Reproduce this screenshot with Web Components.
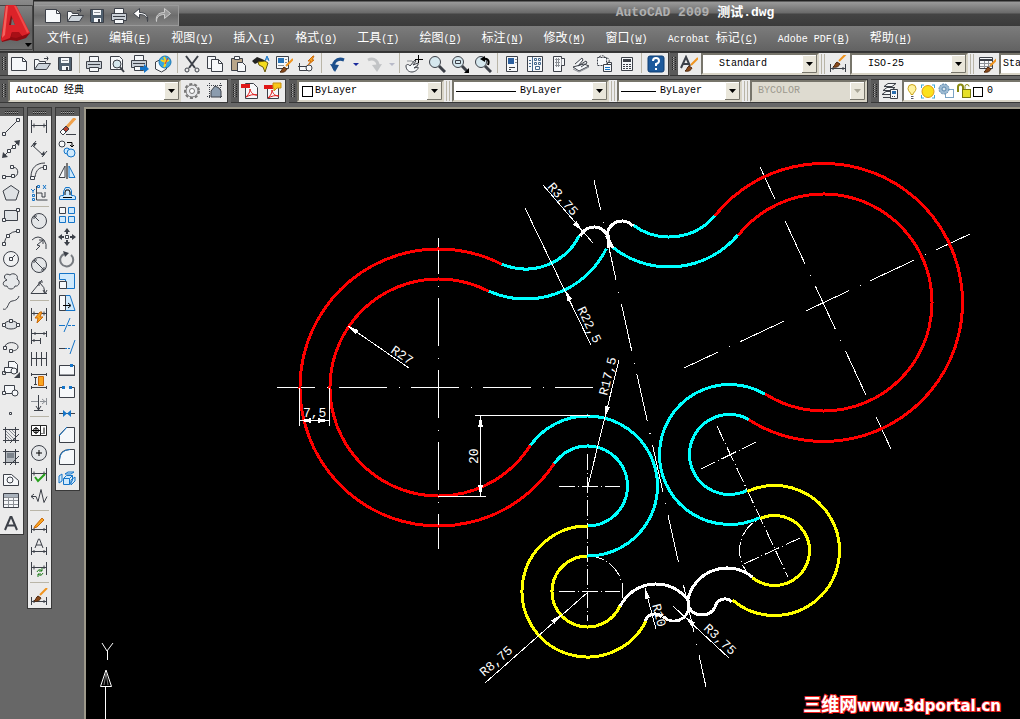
<!doctype html>
<html lang="zh">
  <head>
    <meta charset="UTF-8">
    <title>AutoCAD 2009 测试.dwg</title>
    <style>
      body { margin: 0; background: #676767; }
    </style>
  </head>
<body>

<template id="cad-app">
  <style>
    :host { display: flex; flex-direction: column; height: 100vh; min-height: 640px; overflow: hidden; background: #676767;
      font-family: "Liberation Mono", "Noto Sans CJK SC", monospace; font-size: 10px; color: #000; }
    header { display: grid; grid-template-columns: 34px 1fr; grid-template-rows: 26px 25px; flex: none; border-bottom: 1px solid #333; }
    cad-logo { grid-row: 1 / 3; }
    .row { display: flex; gap: 3px; flex: none; margin-bottom: 3px; white-space: nowrap; }
    .row.last { margin-bottom: 4px; }
    .tight { gap: 1px; }
    .rest { flex: 1 0 auto; }
    .work { display: flex; flex: 1; min-height: 0; }
    .dock { display: flex; gap: 3px; align-items: flex-start; flex: none; padding-right: 4px; }
    cad-drawing { flex: 1; min-width: 0; }
    svg { display: block; }
  </style>
  <header>
    <cad-logo></cad-logo>
    <cad-title><span slot="app">AutoCAD 2009</span><span slot="file">测试.dwg</span></cad-title>
    <cad-menu></cad-menu>
  </header>
  <div class="row tight">
    <cad-bar tools="new open save | print preview publish web | cut copy paste match-prop block-edit sheet-edit | undo drop redo drop-off | pan zoom zoom-window zoom-prev | properties design-center palettes sheet-set markup calc | help"></cad-bar>
    <cad-bar class="rest">
      <cad-tool name="text-style"></cad-tool>
      <cad-combo label="文字样式" value="Standard" style="--w: 118px; --pad: 16px"></cad-combo>
      <cad-split></cad-split>
      <cad-tool name="dim-style"></cad-tool>
      <cad-combo label="标注样式" value="ISO-25" style="--w: 118px; --pad: 16px"></cad-combo>
      <cad-split></cad-split>
      <cad-tool name="table-style"></cad-tool>
      <cad-combo label="表格样式" value="Standard" style="--w: 118px; --pad: 2px"></cad-combo>
    </cad-bar>
  </div>
  <div class="row last">
    <cad-bar>
      <cad-combo label="工作空间" value="AutoCAD 经典" style="--w: 173px; --pad: 6px"></cad-combo>
      <cad-tool name="gear"></cad-tool>
      <cad-tool name="workspace"></cad-tool>
    </cad-bar>
    <cad-bar tools="pdf pdf-note"></cad-bar>
    <cad-bar>
      <cad-combo label="颜色" value="ByLayer" style="--w: 147px; --pad: 2px">
        <svg width="14" height="16"><rect x="3.5" y="3.5" width="10" height="10" fill="#fff" stroke="#000"/></svg>
      </cad-combo>
      <cad-split></cad-split>
      <cad-combo label="线型" value="ByLayer" style="--w: 157px; --pad: 4px">
        <svg width="62" height="16"><path d="M2 8.5h60" stroke="#000"/></svg>
      </cad-combo>
      <cad-split></cad-split>
      <cad-combo label="线宽" value="ByLayer" style="--w: 125px; --pad: 4px">
        <svg width="37" height="16"><path d="M2 8.5h35" stroke="#000"/></svg>
      </cad-combo>
      <cad-split></cad-split>
      <cad-combo label="打印样式" value="BYCOLOR" off style="--w: 117px; --pad: 6px"></cad-combo>
    </cad-bar>
    <cad-bar class="rest">
      <cad-tool name="layers"></cad-tool>
      <cad-combo label="图层" value="0" style="--w: 240px; --pad: 3px">
        <svg width="80" height="18">
          <path d="M7 12.500c0-2-3-3-3-6a4 4 0 0 1 8 0c0 3-3 4-3 6z" fill="#fff3a0" stroke="#c9a21a"/><path d="M7 14.500h2.500M7 16.500h2.500" stroke="#556"/>
          <path d="M17 3h3M28 3h3M17 16h3M28 16h3M17.500 3v3M30.500 3v3M17.500 13v3M30.500 13v3" stroke="#3fa8d8"/><circle cx="24" cy="9.500" r="6" fill="#fbe21e" stroke="#e09a10"/>
          <rect x="41.500" y="7.500" width="8" height="8" fill="#fff" stroke="#7aa3c4"/><circle cx="40" cy="7" r="5" fill="#9dbbd3" stroke="#5b87ac" stroke-dasharray="2 1"/><circle cx="40" cy="7" r="2" fill="#d9e6ef" stroke="#5b87ac"/>
          <path d="M54 10V5a2.500 2.500 0 0 1 5 0v2" fill="none" stroke="#8a8a10" stroke-width="2"/><rect x="58.500" y="7.500" width="8" height="8" fill="#e6e02a" stroke="#77770c"/><path d="M61 8V4.500a2 2 0 0 1 4 0" fill="none" stroke="#8a8a10"/>
          <rect x="69.500" y="5.500" width="9" height="9" fill="#fff" stroke="#000"/>
        </svg>
      </cad-combo>
    </cad-bar>
  </div>
  <div class="work">
    <div class="dock">
      <cad-palette edge tools="line xline pline polygon rect arc circle cloud spline ellipse ellipse-arc insert make-block point hatch gradient region table text"></cad-palette>
      <cad-palette tools="dim-linear dim-aligned dim-arc dim-ordinate | dim-radius dim-jog dim-diameter dim-angle | dim-quick dim-base dim-continue dim-space dim-break | tolerance center-mark inspect jog-line | dim-edit dim-text dim-update | dim-brush"></cad-palette>
      <cad-palette tools="erase copy-obj mirror offset array move rotate scale stretch trim extend break-point break join chamfer fillet explode"></cad-palette>
    </div>
    <cad-drawing></cad-drawing>
  </div>
</template>

<template id="cad-logo">
  <style>
    :host { display: block; background: linear-gradient(#8a8a8a, #5e5e5e 60%, #707070); border-right: 1px solid #333; }
    button { display: block; width: 100%; height: 100%; padding: 0; border: 0; background: none; }
    svg { display: block; }
  </style>
  <button aria-label="菜单浏览器">
    <svg width="33" height="50" viewBox="0 0 33 50">
      <path d="M0 4.500h32.500v44H0" fill="none" stroke="#444"/>
      <path d="M1 36 2 41l8-2 7 1 9-3 4-5-5-3H8z" fill="#8e0a10"/>
      <path d="M5 6q0-2 2-2h7q2 0 3 2l13 26-8 3-4-4H12l-2 6-8 3-1-1z" fill="#dc2229"/>
      <path d="m11 14 4 10H9z" fill="#7a1115"/>
      <path d="m12 17 3 7h-4z" fill="#707070"/>
      <path d="M12 31h7l3 4-6 2-5-1z" fill="#a80f16"/>
      <path d="M6 5h2L5 34l-3 3z" fill="#f4615c"/>
      <path d="M14 5h2l13 26-2 1z" fill="#f04a48"/>
      <path d="M25 42h7l-4 4z" fill="#000"/>
    </svg>
  </button>
</template>

<template id="cad-title">
  <style>
    :host { display: flex; align-items: stretch; background: linear-gradient(#222 0 1px, #9a9a9a 2px, #6a6a6a 13px, #444 14px, #3a3a3a); }
    .quick { display: flex; margin-top: 5px; padding: 0 4px 0 8px; border: 1px solid #999; border-left: 0; background: linear-gradient(#8a8a8a, #6d6d6d 50%, #828282); box-sizing: border-box; align-items: center; }
    .quick cad-tool { --tool: 22px; }
    h1 { margin: 0; font-size: 13px; line-height: 26px; font-weight: bold; color: #b0b0b0; white-space: pre; }
    .file { color: #fff; }
    .before { flex: 16; }
    .after { flex: 9; }
  </style>
  <div class="quick">
    <cad-tool name="new"></cad-tool><cad-tool name="open"></cad-tool><cad-tool name="save"></cad-tool><cad-tool name="print"></cad-tool><cad-tool name="back"></cad-tool><cad-tool name="forward"></cad-tool>
  </div>
  <span class="before"></span>
  <h1><slot name="app"></slot> <span class="file"><slot name="file"></slot></span></h1>
  <span class="after"></span>
</template>

<template id="cad-menu">
  <style>
    :host { display: block; background: linear-gradient(#7c7c7c, #626262); min-width: 0; overflow: hidden; }
    nav { display: flex; gap: 20px; padding-left: 13px; height: 25px; align-items: center; }
    button { flex: none; padding: 0; border: 0; background: none; color: #fff; font: 12px/16px "Noto Sans CJK SC", sans-serif; white-space: pre; }
    span { font-family: "Liberation Mono", monospace; font-size: 10px; }
  </style>
  <nav></nav>
</template>

<template id="cad-bar">
  <style>
    :host { display: flex; flex: none; box-sizing: border-box; height: 24px; align-items: center; background: #ebebeb; border: solid #383838; border-width: 1px 1px 1px 0; }
    .grip { flex: none; width: 8px; height: 22px; background: #5a5a5a; }
    .grip svg, .tools { display: flex; }
  </style>
  <div class="grip"><svg width="8" height="22"><path d="M2.500 4v14M5.500 4v14" stroke="#222" stroke-dasharray="1 1"/><path d="M3.500 4v14" stroke="#aaa" stroke-dasharray="1 1"/></svg></div>
  <div class="tools"></div>
  <slot></slot>
</template>

<template id="cad-palette">
  <style>
    :host { display: block; box-sizing: border-box; width: 25px; background: #ebebeb; border: 1px solid #383838; }
    :host([edge]) { margin-left: -1px; }
    .grip { height: 8px; background: #5a5a5a; }
    .grip svg { display: block; margin: auto; }
    .tools { display: flex; flex-direction: column; }
  </style>
  <div class="grip"><svg width="15" height="8"><path d="M1 3.500h13M1 5.500h13" stroke="#222" stroke-dasharray="1 1"/><path d="M1 4.500h13" stroke="#aaa" stroke-dasharray="1 1"/></svg></div>
  <div class="tools"></div>
</template>

<template id="cad-tool">
  <style>
    :host { display: block; flex: none; width: var(--tool, 23px); height: 22px; }
    :host([name="drop"]), :host([name="drop-off"]) { width: 10px; }
    :host([name="undo"]), :host([name="redo"]) { width: 26px; }
    button { display: flex; align-items: center; justify-content: center; width: 100%; height: 100%; padding: 0 1px 0 0; border: 0; background: none; }
    svg { display: block; flex: none; fill: none; stroke: #3c4048; }
    .p { fill: #f6f8fa; }
    .n { stroke: none; }
    .k { fill: #3c4048; stroke: none; }
    .g { stroke: #8c9096; }
    .b { stroke: #1474c8; }
    .lb { fill: #cfe9fc; stroke: #1474c8; }
    .bk { fill: #1474c8; stroke: none; }
    .w2 { stroke-width: 2; }
    .o { fill: #f9a51f; stroke: #c9680b; }
    .br { fill: #8a4a1c; stroke: #4c270d; }
  </style>
  <button></button>
</template>

<template id="cad-split">
  <style>
    :host { display: flex; flex: none; width: 8px; height: 20px; box-sizing: border-box; justify-content: space-between; padding: 0 2px; }
    :host([small]) { width: 6px; }
    :host([flat]) { width: 19px; height: 6px; padding: 2px 0; margin: 0 2px; }
    i { width: 1px; background: #b9b5a7; }
    :host([small]) i + i { display: none; }
    :host([flat]) i { width: 19px; height: 1px; }
    :host([flat]) i + i { display: none; }
  </style>
  <i></i><i></i>
</template>

<template id="cad-combo">
  <style>
    :host { display: flex; flex: none; box-sizing: border-box; width: var(--w); height: 22px; position: relative; align-items: center; background: #fff; border: 2px solid; border-color: #77756b #d8d4c6 #d8d4c6 #77756b; }
    :host([off]) { background: #dedbd0; }
    select { flex: 1; min-width: 0; height: 18px; appearance: none; border: 0; outline: 0; border-radius: 0; margin: 0; padding: 0 16px 0 var(--pad); background: none; color: #000; font: 10px/18px "Liberation Mono", "Noto Sans CJK SC", monospace; }
    select:disabled { color: #9c998e; opacity: 1; }
    .arrow { position: absolute; right: 0; top: 0; pointer-events: none; }
  </style>
  <slot></slot>
  <select><option></option></select>
  <svg class="arrow" width="15" height="18"><rect width="15" height="18" fill="#e9e6da"/><path d="M.5 17.500V.5h14" fill="none" stroke="#fff"/><path d="M0 17.500h14.500V0" fill="none" stroke="#77756b"/><path class="tip" d="M4 7h7l-3.500 4z"/></svg>
</template>

<template id="cad-drawing">
  <style>
    :host { display: block; position: relative; box-sizing: border-box; overflow: hidden; background: #000; border: solid #9d998a; border-width: 2px 0 0 2px; }
    svg { display: block; width: 100%; height: 100%; }
    text { fill: #fff; font: 13px "Liberation Mono", monospace; }
    .mark { position: absolute; right: 19px; bottom: 3px; color: #fff; font: bold 15px/20px "DejaVu Sans", sans-serif; -webkit-text-stroke: 2px #f02020; paint-order: stroke fill; white-space: nowrap; }
    .mark span { font-size: 18px; font-weight: bold; font-family: "Noto Sans CJK SC", sans-serif; }
  </style>
  <svg>
    <!-- everything is drawn in window units; the group moves the origin to the canvas corner -->
    <g transform="translate(-86 -109)">
      <g id="axes" fill="none" stroke="#fff" shape-rendering="crispEdges"></g>
      <g id="arcs" fill="none" stroke-width="3" shape-rendering="crispEdges"></g>
      <g id="dims" fill="#fff" stroke="#fff" shape-rendering="crispEdges"></g>
      <g id="labels"></g>
      <g fill="none" stroke="#fff">
        <path d="M102 643l5 8 6-8M107.500 651v9"/>
        <path d="M100.500 686.500h11L106 670z"/><path d="M104 685l2-12 2 12" stroke="#777"/><path d="M105.500 687v60"/>
      </g>
    </g>
  </svg>
  <div class="mark"><span>三维网</span>www.3dportal.cn</div>
</template>

<script>
const brush = '<path d="M16 2 9 9" stroke="#f0941e" stroke-width="2"/><path class="br" d="M3 15c2-1 2-4 4-5l3 2c-1 2-3 4-7 3z"/>';
const sheet = '<path class="p" d="M1.500 2.500h11l4 4v9h-15z"/><path d="M12.500 2.500v4h4"/>';
const printer = '<path class="p" d="M4.500 6V1.500h9V6"/><path d="M1.500 6.500h15v7h-15z" fill="#c9cfd6"/><path d="M3 9.500h12"/><path class="p" d="M4.500 12.500h9v4h-9z"/>';
const lens = '<circle cx="7" cy="7" r="5.500" fill="#d5e7ee"/><path d="m11 11 6 6" stroke-width="3"/>';
const dim = '<path d="M1.500 2v13M16.500 2v13M2 7.500h14M4 5.500v4M14 5.500v4"/>';
const dimLow = '<path d="M1.500 9v8M16.500 9v8M1 13.500h16M4 12v3M14 12v3"/>';
const bolt = 'M10 6 5 12h3l-1 5 6-6h-3l2-5z';

const icons = {
  'new': sheet,
  'open': '<path class="p" d="M1.500 14.500v-10h4l1 2h6v2"/><path d="M1.500 14.500l4-6h12l-4 6z" fill="#cdd4db"/><path d="M11 3.500h4l-1-2M15 3.500l-1 2"/>',
  'save': '<path d="M2.500 2.500h13v13h-12l-1-1z" fill="#50606f"/><path class="p n" d="M5 3h8v5H5z"/><path d="M6 5.500h6" class="g"/><path class="p n" d="M6 11h7v4H6z"/><path class="k" d="M10 12h2v3h-2z"/>',
  'print': printer,
  'back': '<path d="M15.500 14.500c0-5-3-7-8-7v4l-6-5 6-5v4c7 0 9 4 8 9z" fill="#fff"/>',
  'forward': '<path d="M2.500 14.500c0-5 3-7 8-7v4l6-5-6-5v4c-7 0-9 4-8 9z" fill="#9a9a9a" stroke="#ccc"/>',
  'preview': '<path class="p" d="M2.500 1.500h9l3 3v10h-12z"/><circle cx="9" cy="9" r="4" fill="#d5e7ee"/><path class="w2" d="m12 12 4 5"/>',
  'publish': '<g transform="translate(-1 -1)">' + printer + '</g><path class="bk" d="M9 12h4V9l5 5-5 4v-3H9z"/>',
  'web': '<path class="p" d="m1.500 7 6-3 5 3v7l-5 3-6-3z"/><circle cx="11" cy="7" r="6" fill="#35a8e0" stroke="#1f78b4"/><path d="M7 5q4 3 8 0M10 2q3 5 0 10" stroke="#f6d41c" stroke-width="2"/><path d="M14 3l-3 6" stroke="#d33"/>',
  'cut': '<path class="w2" d="m3 1 9 12M15 1 6 13"/><circle cx="4" cy="15" r="2"/><circle cx="14" cy="15" r="2"/>',
  'copy': '<path class="p" d="M1.500 1.500h8v12h-8z"/><path class="p" d="M5.500 4.500h7l4 4v8h-11z"/><path d="M12.500 4.500v4h4"/>',
  'paste': '<path d="M2.500 3.500h11v12h-11z" fill="#b9a68a"/><path class="p" d="M5.500 1.500h5v3h-5zM8.500 7.500h5l3 3v6h-8z"/>',
  'match-prop': '<path d="M0 6l5-4 5 2 4 2-3 5-4-4-4 2z" fill="#222" stroke="none"/><path d="M6 7l7-1 3 2-3 9-2-5-4-2z" fill="#f4dc1c" stroke="#6a5a10"/><path class="b" d="M13 6l2-5 2 5M14 4h3"/>',
  'block-edit': '<path class="p" d="M1.500 1.500h12v12h-12z"/><path d="M3 3h6v5H3z" fill="#2673b8" stroke="none"/><path class="g" d="M10 4.500h2M10 7.500h2M3 10.500h6"/>' + '<g transform="translate(2 2)">' + brush + '</g>',
  'sheet-edit': '<path class="p" d="M1.500 11.500h9v4h-9z"/><circle cx="11" cy="13" r="3" class="p"/><path d="M1.500 8v7M0 11.500h5"/><path class="o" d="m15 1-5 5h3l-3 4 6-5h-2l2-4z"/>',
  'undo': '<path d="M6 15c-4-7 2-13 9-10" stroke="#1c4f8c" stroke-width="3"/><path d="M1 9l5 8 4-7z" fill="#1c4f8c" stroke="none"/>',
  'redo': '<path d="M12 13c3-6-3-11-9-8" stroke="#c2c4c6" stroke-width="3"/><path d="M17 9l-5 8-5-7z" fill="#c2c4c6" stroke="none"/>',
  'drop': '<path d="M6 8h6l-3 3z" fill="#1a2a9c" stroke="none"/>',
  'drop-off': '<path d="M6 8h6l-3 3z" fill="#b8bac8" stroke="none"/>',
  'pan': '<path class="p" d="M1 11c0-2 3-2 4 0l5-6 1 1-3 4 5-2v2l-4 3 4-1c1 2-3 5-6 5-4 0-6-3-6-6z"/><path d="M2 6h5l2 2" class="g"/><path stroke="#000" d="M13.500 0v8M10 4.500h8"/>',
  'zoom': lens,
  'zoom-window': lens + '<path d="M4.500 5.500h5v3h-5z"/><path fill="#000" stroke="none" d="M18 13v5h-5z"/>',
  'zoom-prev': lens + '<path d="M14 10c2-5-1-7-5-6" stroke="#000" stroke-width="2"/><path d="M6 4l5-3v6z" fill="#000" stroke="none"/>',
  'properties': '<path class="p" d="M3.500 1.500h11v15h-11z"/><path d="M5 3h6v6H5z" fill="#2b5f9e" stroke="none"/><path class="g" d="M12 4.500h2M12 7.500h2"/><path d="M6 12.500h6M6 14.500h2"/>',
  'design-center': '<path class="p" d="M1.500 1.500h15v15h-15z"/><path d="M6.500 2v14M3 5.500h2M3 8.500h2M3 11.500h2M8.500 3.500h2v2h-2zM12.500 3.500h2v2h-2zM8.500 7.500h2v2h-2zM12.500 7.500h2v2h-2zM9.500 11.500h4v3h-4z" stroke="#41668c"/>',
  'palettes': '<path class="p" d="M4.500 1.500h8v15h-8z"/><path class="p" d="M12.500 3.500h3v7h-3"/><path d="M6 4.500h5M6 7.500h5M6 10.500h5M7.500 3v9M9.500 3v9" class="g"/>',
  'sheet-set': '<path class="p" d="m1 12 11-3 5 2-10 5zM3 9l7-6 1 2-5 6M6 11l8-5 1 2-6 4"/><path class="g" d="M1 14l6 3 10-5"/>',
  'markup': '<path class="p" d="M2.500 2.500h9v8h-9z" stroke-dasharray="2 1"/><path d="M4 2q4-3 7 1 4 0 3 4" stroke-dasharray="2 1"/><path class="p" d="M8.500 9.500h8v7h-8zM12.500 7.500h4v2h-4z"/><path class="b" d="M10 12.500h5M10 14.500h5"/>',
  'calc': '<path class="p" d="M3.500 2.500h11v13h-11z"/><path class="k" d="M5 4h8v3H5z"/><path d="M5 9.500h8M5 11.500h8M5 13.500h8" stroke-dasharray="2 1"/>',
  'help': '<rect x="1" y="1" width="16" height="16" rx="2" fill="#1d5a9c" stroke="#0e3c70"/><path d="M6 6q0-3 3-3t3 3q0 2-3 3v2M9 13v2" stroke="#fff" stroke-width="2"/>',
  'text-style': '<path class="w2" d="M1 13 6 2l4 9M3 9h6"/><g transform="translate(2 1)">' + brush + '</g>',
  'dim-style': dimLow + '<g transform="translate(1 -3)">' + brush + '</g>',
  'table-style': '<path class="p" d="M1.500 2.500h13v11h-13z"/><path d="M2 5h12" stroke-width="2"/><path class="g" d="M2 8.500h12M2 11.500h12M6.500 6v7M10.500 6v7"/><g transform="translate(3 2)">' + brush + '</g>',
  'gear': '<circle cx="9" cy="9" r="7" stroke="#777" stroke-width="2" stroke-dasharray="3 2"/><circle cx="9" cy="9" r="6" fill="#e9eaec" stroke="#777"/><circle cx="9" cy="9" r="2.500" fill="#fff" stroke="#777"/>',
  'workspace': '<path d="M3.500 1v16M14.500 1v16M1 3.500h16M1 14.500h16" stroke-dasharray="1 1"/><path d="M5 15V9l4-5 4 2 2 3v6z" fill="#8b9cae"/>',
  'pdf': '<path class="p" d="M4.500 1.500h8l4 4v11h-12z"/><path d="M0 2h9v4H0z" fill="#e01818" stroke="none"/><path d="M5 15c3-3 4-5 4-8 1 4 3 6 7 6-4-1-7 0-11 2z" stroke="#e01818"/>',
  'pdf-note': '<path class="p" d="M3.500 4.500h11v12h-11z"/><path d="M0 3h9v4H0z" fill="#e01818" stroke="none"/><path d="M4 16c3-3 4-5 4-8 1 4 3 6 7 6-4-1-7 0-11 2z" stroke="#e01818"/><path d="M9 1h8v5h-4l-3 3V6H9z" fill="#f8c81c" stroke="#c98f10"/>',
  'layers': '<path class="p" d="M3 4.500l4-3h8l-4 3zM2 8.500l4-3h8l-4 3zM1 12.500l4-3h8l-3 3z"/><path d="M2 15.500h7"/><path class="p" d="M9.500 7.500h7v9h-7z"/><path d="M11 9h4v3h-4z" fill="#2b6fb0" stroke="none"/><path d="M11 14.500h4" stroke-dasharray="1 1"/>',

  'line': '<path d="M2 16 16 2"/><path class="p" d="M.5 14.500h3v3h-3zM14.500.5h3v3h-3z"/>',
  'xline': '<path d="M2 16 16 2"/><path class="k" d="M0 18l1-6 5 5zM18 0l-1 6-5-5z"/><path class="p" d="M5.500 9.500h3v3h-3zM10.500 5.500h3v3h-3z"/>',
  'pline': '<path d="M2 14.500h10c5 0 5-9 0-9H9"/><path class="p" d="M.5 13.500h3v3h-3zM8.500 3.500h3v3h-3zM9.500 12.500h3v3h-3z"/>',
  'polygon': '<path d="M9 1.500 17 7l-3 9H4L1 7z" fill="#dfe2e5"/>',
  'rect': '<path d="M2.500 4.500h13v10h-13z" fill="#dfe2e5"/><path class="p" d="M.5 12.500h3v3h-3zM14.500 2.500h3v3h-3z"/>',
  'arc': '<path d="M2 16Q4 4 16 3"/><path class="p" d="M.5 14.500h3v3h-3zM4.500 6.500h3v3h-3zM14.500 1.500h3v3h-3z"/>',
  'circle': '<circle cx="9" cy="9" r="7.500" fill="#f0f1f2"/><path d="m9 9 4-4"/><path class="p" d="M7.500 7.500h3v3h-3z"/>',
  'cloud': '<path d="M5 8C0 6 3 0 8 3c3-3 9 0 7 4 4 2 2 8-2 7-1 4-7 4-8 0-5 1-5-5 0-6z" fill="#e6e8ea"/>',
  'spline': '<path d="M1 15C5 17 6 10 8 8s7 0 9-6"/>',
  'ellipse': '<ellipse cx="9" cy="9" rx="7" ry="4" fill="#dfe2e5"/><path class="p" d="M.5 7.500h3v3h-3zM14.500 7.500h3v3h-3zM7.500 3.500h3v3h-3z"/>',
  'ellipse-arc': '<path d="M3 10C2 3 16 3 16 9c0 3-4 4-7 4"/><path class="p" d="M1.500 8.500h3v3h-3zM7.500 11.500h3v3h-3z"/>',
  'insert': '<path class="p" d="M6.500 1.500h6l3 3v8h-9z"/><path class="p" d="M2.500 7.500h8v5h-8z"/><circle class="p" cx="12" cy="11" r="3"/><path d="M.5 11.500h3v3h-3z"/><path class="k" d="M18 12v6h-6z"/>',
  'make-block': '<path class="p" d="M2.500 3.500h10v8h-10z"/><circle class="p" cx="13" cy="11" r="3"/><path class="p" d="M.5 9.500h3v3h-3z"/>',
  'point': '<path class="p" d="M7.500 8.500h2v2h-2z"/>',
  'hatch': '<path d="M3.500 1v16M13.500 1v16M1 3.500h16M1 14.500h16"/><path class="g" d="m4 5 9 9M4 8l6 6M4 11l3 3M7 4l6 6M10 4l3 3"/><path d="m8 17 9-9" />',
  'gradient': '<path d="M4 4h9v10H4z" fill="#b4b9be" stroke="none"/><path d="M5 5h7v5H5z" fill="#7c838b" stroke="none"/><path d="M3.500 1v16M13.500 1v16M1 3.500h16M1 14.500h16"/><path d="m8 17 9-9"/>',
  'region': '<path class="p" d="M1.500 4.500h8l7 6v5h-15z"/><circle class="p" cx="8" cy="10" r="3"/>',
  'table': '<path class="p" d="M1.500 1.500h15v14h-15z"/><path d="M2 2h14v3H2z" fill="#a9b2bc" stroke="none"/><path class="g" d="M2 5.500h14M2 8.500h14M2 12.500h14M6.500 5v10M11.500 5v10"/>',
  'text': '<path d="M3 16 8.500 3h1L15 16M5 11.500h8" stroke-width="2"/>',

  'dim-linear': dim,
  'dim-aligned': '<path d="m2 5 12 11M1 7l5-6M12 17l5-6"/><path class="k" d="M3 3h4l-3 4zM15 15h-4l3-4z"/>',
  'dim-arc': '<path d="M5 15C6 8 9 5 16 5"/><path d="M1 15C1 6 6 1 15 1"/><path class="p" d="M.5 14.500h4v3h-4zM13.500 3.500h3v4h-3z"/>',
  'dim-ordinate': '<path d="M6.500 2v14h11M7 9h5v4h3V8"/><path class="b" d="M2.500 10.500h2v2h-2zM2.500 14.500h2v2h-2zM1 5l2 2 2-2M3 7v2M13 1l3 4M16 1l-3 4M7.500 1.500h2v2h-2z"/>',
  'dim-radius': '<circle cx="9" cy="9" r="7.500" fill="#e4e6e8"/><path d="M9 9 4 4M4 7V4h3"/>',
  'dim-jog': '<path d="M2 6q6-6 12 0 3 4 2 9M6 16l4-4-3-1 6-5M9 6h4v4"/>',
  'dim-diameter': '<circle cx="9" cy="9" r="7.500" fill="#e4e6e8"/><path d="m4 4 10 10M4 7V4h3M14 11v3h-3"/>',
  'dim-angle': '<path d="M17 15.500H1L12 2M10 5q5 4 5 10M13 12l2 4 2-4M9 8V4h4"/>',
  'dim-quick': dim + '<path class="o" d="' + bolt + '"/>',
  'dim-base': '<path d="M1.500 1v15M10.500 10v6M16.500 3v6M2 5.500h14M2 12.500h8M5 4v3M14 4v3M4 11v3"/>',
  'dim-continue': '<path d="M1.500 2v14M6.500 2v14M11.500 2v14M16.500 2v14M2 8.500h14"/>',
  'dim-space': '<path d="M1.500 1v3M16.500 1v3M1 2.500h16M1.500 14v3M16.500 14v3M1 15.500h16M5.500 5v8M4 5.500h3M4 12.500h3"/><path class="o" d="M8.500 4.500h5v9h-5z"/>',
  'dim-break': '<path class="g" d="M1 7.500h7M10 7.500h7M16.500 4v7M12 5l3 2.500-3 2.500"/><path d="M8.500 1v15M4 16.500h9M6 12l2.500 4 2.500-4"/>',
  'tolerance': '<path d="M1.500 3.500h15v10h-15zM10.500 4v9" fill="#fff" stroke="#222"/><circle cx="6" cy="8.500" r="2.500" stroke="#000"/><path d="M2 8.500h8M6 5v7M14 5.500V12M12 11v1" stroke="#000"/>',
  'center-mark': '<circle cx="9" cy="9" r="7.500" fill="#e4e6e8"/><path stroke="#000" d="M9 6v6M6 9h6"/>',
  'inspect': dim + '<path d="m5 11 3 4 7-7" stroke="#26a11b" stroke-width="2"/>',
  'jog-line': '<path d="M1 8.500h5l2 5 3-12 3 13 3-6M4 6 1 8.500 4 11"/>',
  'dim-edit': dimLow + '<path d="M5 10 12 2l2 2-7 7-3 1z" class="o"/>',
  'dim-text': dimLow + '<path d="M5 10 8.500 1h1L13 10M6 7h6"/>',
  'dim-update': dim + '<path class="n" fill="#ebebeb" d="M6 9h9v8H6z"/><path d="M7 12q2-4 5-1M13 13q-2 4-5 1M12 8v3H9M8 17v-3h3" stroke="#1d7a18"/>',
  'dim-brush': dimLow + '<g transform="translate(1 -2)">' + brush + '</g>',

  'erase': '<path d="M17 0 9 9" stroke="#f0a24c" stroke-width="3"/><path d="m4 12 4-4 3 3-4 4z" fill="#b6402c"/><path d="m2 14 3-3 3 3-3 3z" fill="#fff"/><path d="M8 16.500h10"/>',
  'copy-obj': '<circle cx="4" cy="4" r="3" class="p"/><circle cx="9" cy="11" r="3" class="lb"/><circle cx="13" cy="13" r="4" class="lb"/><path stroke="#000" d="M9 2.500h5v4M12 5l2 2 2-2"/>',
  'mirror': '<path class="p" d="M1 15.500 7 4v11.500z"/><path class="lb" d="M17 15.500 11 4v11.500z"/><path stroke="#000" d="M9 1v16"/>',
  'offset': '<path class="lb" d="M1.500 15.500v-3l2-1h2v-4l2-4h4l2 3v5h2l2 1v3z"/><path stroke="#000" d="M5 13.500h9M7 11V8l1-2h3l1 2v3"/>',
  'array': '<path class="p" d="M1.500 1.500h6v6h-6z"/><path class="lb" d="M10.500 1.500h6v6h-6zM1.500 10.500h6v6h-6zM10.500 10.500h6v6h-6z"/>',
  'move': '<path class="w2" d="M9 2v4M9 12v4M2 9h4M12 9h4"/><path class="k" d="M9 0l3 4H6zM9 18l3-4H6zM0 9l4-3v6zM18 9l-4-3v6z"/><path class="p" d="M7.500 7.500h3v3h-3z"/>',
  'rotate': '<path d="M6 4a6.500 6.500 0 1 0 7 1" stroke="#777b80" stroke-width="2"/><path class="k" d="M5 1l6 2-4 4z"/>',
  'scale': '<path class="lb" d="M1.500 1.500h15v15h-9v-9h-6z"/><path class="p" d="M1.500 9.500h7v7h-7z"/>',
  'stretch': '<path class="lb" d="M7 1.500h5l5 15H7z"/><path class="p" d="M1.500 1.500h6v15h-6z"/><path stroke="#000" d="M5 11.500h7M10 9l3 2.500-3 2.500"/>',
  'trim': '<path class="b" d="M10 9.500h8" stroke-dasharray="3 1"/><path class="b" d="M1 9.500h6"/><path class="b" d="m6 16 6-14"/>',
  'extend': '<path d="M1 10.500h6"/><path class="b" d="M7 10.500h5" stroke-dasharray="2 1"/><path class="b" d="m12 16 5-14"/>',
  'break-point': '<path class="p" d="M1.500 15V5.500h15V15z"/><path d="M1 15.500h16"/><path class="bk" d="M12 4h3v3h-3z"/>',
  'break': '<path class="p" d="M1.500 15.500V5.500h15v10z"/><path d="M7 5.500h4" stroke="#ebebeb"/><path class="bk" d="M4 4h3v3H4zM11 4h3v3h-3z"/>',
  'join': '<path d="M1 9.500h16"/><path class="bk" d="m5 6 4 3.500-4 3.500zM13 6 9 9.500l4 3.500z"/>',
  'chamfer': '<path class="p" d="M1.500 16.500V9l7-7.500h8v15z"/><path class="b" d="m1 10 8-9"/>',
  'fillet': '<path class="p" d="M1.500 16.500V11q0-9 10-9.500h5v15z"/><path class="b" d="M1.500 12Q2 2 12 1.500"/>',
  'explode': '<path class="lb" d="M5.500 8.500h6v6h-6zM5.500 8.500l3-3h6l-3 3M14.500 5.500v5l-3 4M1 6l3-2v7l-3 2zM7 4l3-2h6l-3 2zM13 10l4-3v4l-4 4z"/>'
};

function shadow(el) {
  const root = el.attachShadow({mode: 'open'});
  root.appendChild(document.getElementById(el.localName).content.cloneNode(true));
  return root;
}

function addTools(box, list, attr) {
  (list || '').split(' ').filter(Boolean).forEach(name => {
    const el = document.createElement(name === '|' ? 'cad-split' : 'cad-tool');
    if (name === '|') el.setAttribute(attr, '');
    else el.setAttribute('name', name);
    box.appendChild(el);
  });
}

for (const name of ['cad-logo', 'cad-title', 'cad-split']) {
  customElements.define(name, class extends HTMLElement {
    constructor() {
      super();
      shadow(this);
    }
  });
}

customElements.define('cad-tool', class extends HTMLElement {
  connectedCallback() {
    if (this.shadowRoot) return;
    const button = shadow(this).querySelector('button');
    const name = this.getAttribute('name');
    button.setAttribute('aria-label', name);
    button.innerHTML = '<svg width="18" height="18" viewBox="0 0 18 18">' + icons[name] + '</svg>';
  }
});

customElements.define('cad-bar', class extends HTMLElement {
  connectedCallback() {
    if (this.shadowRoot) return;
    addTools(shadow(this).querySelector('.tools'), this.getAttribute('tools'), 'small');
  }
});

customElements.define('cad-palette', class extends HTMLElement {
  connectedCallback() {
    if (this.shadowRoot) return;
    addTools(shadow(this).querySelector('.tools'), this.getAttribute('tools'), 'flat');
  }
});

customElements.define('cad-combo', class extends HTMLElement {
  connectedCallback() {
    if (this.shadowRoot) return;
    const root = shadow(this);
    const select = root.querySelector('select');
    select.setAttribute('aria-label', this.getAttribute('label'));
    select.options[0].textContent = this.getAttribute('value');
    if (this.hasAttribute('off')) {
      select.disabled = true;
      root.querySelector('.tip').setAttribute('fill', '#aaa798');
    }
  }
});

customElements.define('cad-menu', class extends HTMLElement {
  constructor() {
    super();
    const items = [['文件', 'F'], ['编辑', 'E'], ['视图', 'V'], ['插入', 'I'], ['格式', 'O'], ['工具', 'T'], ['绘图', 'D'],
      ['标注', 'N'], ['修改', 'M'], ['窗口', 'W'], ['标记', 'C', 'Acrobat '], ['', 'B', 'Adobe PDF'], ['帮助', 'H']];
    shadow(this).querySelector('nav').innerHTML = items.map(([label, key, latin]) =>
      `<button>${latin ? `<span>${latin}</span>` : ''}${label}<span>(<u>${key}</u>)</span></button>`).join('');
  }
});

customElements.define('cad-drawing', class extends HTMLElement {
  constructor() {
    super();
    const root = shadow(this);
    const put = (id, html) => root.getElementById(id).insertAdjacentHTML('beforeend', html);

    // clockwise arc round (cx, cy), from the direction of one point to that of another
    const arc = (cx, cy, r, x0, y0, x1, y1) => {
      const a = Math.atan2(y0 - cy, x0 - cx);
      let b = Math.atan2(y1 - cy, x1 - cx);
      if (b < a) b += 2 * Math.PI;
      const at = t => (cx + r * Math.cos(t)).toFixed(2) + ' ' + (cy + r * Math.sin(t)).toFixed(2);
      return `M${at(a)}A${r} ${r} 0 ${b - a > Math.PI ? 1 : 0} 1 ${at(b)}`;
    };
    const stroke = (color, list) => put('arcs', `<path stroke="${color}" d="${list.map(a => arc(...a)).join('')}"/>`);

    stroke('#f00', [
      [438.5, 387.5, 138.5, 555, 464, 502, 264],
      [438.5, 387.5, 108.5, 530, 445, 489, 291],
      [823.5, 302.5, 139, 715, 216, 749, 419],
      [823.5, 302.5, 108.5, 738, 235, 765, 394]
    ]);
    stroke('#0ff', [
      [525.5, 209, 60, 580, 236, 502, 264],
      [525.5, 209, 90, 607, 249, 489, 291],
      [669, 177, 60, 715, 216, 633, 226],
      [669, 177, 90, 738, 235, 609, 247],
      [729.5, 454.5, 70, 760, 518, 765, 394],
      [729.5, 454.5, 40, 747, 491, 749, 419],
      [587.5, 486, 70, 530, 445, 587.5, 556],
      [587.5, 486, 40, 555, 464, 587.5, 526]
    ]);
    stroke('#ff0', [
      [774.5, 550.5, 65, 747, 491, 732, 601],
      [774.5, 550.5, 35, 760, 518, 752, 578],
      [587.5, 591.5, 65.5, 647, 621, 587.5, 526],
      [587.5, 591.5, 35.5, 620, 606, 587.5, 556]
    ]);
    stroke('#fff', [
      [594, 242, 15, 580, 236, 608, 239],
      [622, 236, 15, 607, 237, 633, 226],
      [656, 624, 40, 620, 606, 688, 601],
      [727, 608, 40, 688, 601, 752, 578],
      [655, 624, 10, 646, 621, 662, 617],
      [674, 606, 15, 689, 606, 662, 617],
      [702, 600, 15, 715, 607, 689, 607],
      [725, 609, 10, 715, 607, 732, 601]
    ]);
    put('arcs', '<path stroke="#fff" d="M608 235v13M608 239l5 9M688 600v8"/>');

    // centre lines: long chain pattern with its start shifted, then the short one
    [['M277 387.500H593', 10], ['M438.500 238V549', 12], ['M760 167 891 449', 13], ['M684 368 970 234', 10], ['M594 180 706 687', 17]]
      .forEach(([d, shift]) => put('axes', `<path d="${d}" stroke-dasharray="48 12 1 11" stroke-dashoffset="${shift}"/>`));
    put('axes', `<path stroke-dasharray="16 3 1 3" d="M587.500 454V621M559 486.500h61M559 591.500h61M717 426 788 577M701 469 756 442M744 564 800 538
      ${arc(587.5, 591.5, 35.5, 588, 556, 620, 606)}${arc(774.5, 550.5, 35, 752, 578, 760, 518)}"/>`);

    put('dims', '<path fill="none" d="M543 185 593 243M525 208 591 345M348 326 409 368M588 486 619 360M475 415.500H590M438 496.500H486M480.500 416V496M299.500 388V426M329.500 388V426M300 420.500H329M588 592 485 683M645 588 656 629M673 606 729 658"/>');
    // arrow heads: tip and direction in which they point
    [[582, 231, 49], [565, 290, 244], [348, 326, 215], [605, 417, 104], [480.5, 416, 270], [480.5, 496, 90],
      [300, 420.5, 180], [329, 420.5, 0], [561, 615, -41], [645, 588, 255], [685, 617, 221]]
      .forEach(([x, y, a]) => put('dims', `<path stroke="none" d="M0 0-11-2.500v5z" transform="translate(${x} ${y}) rotate(${a})"/>`));
    [['R3,75', 547, 187, 49], ['R22,5', 577, 309, 64], ['R27', 390, 352, 34], ['R17,5', 607, 396, -76], ['20', 478, 464, -90],
      ['7,5', 303, 417, 0], ['R8,75', 484, 677, -41], ['R10', 652, 605, 75], ['R3,75', 703, 629, 43]]
      .forEach(([s, x, y, a]) => put('labels', `<text transform="translate(${x} ${y}) rotate(${a})">${s}</text>`));
  }
});

customElements.define('cad-app', class extends HTMLElement {
  constructor() {
    super();
    shadow(this);
  }
});
</script>

<cad-app></cad-app>

</body>
</html>
